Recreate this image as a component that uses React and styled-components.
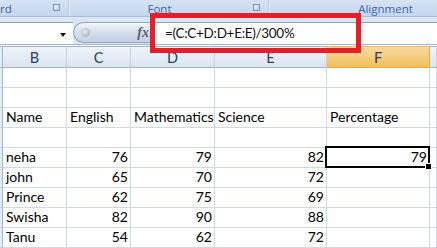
import React from 'react';
import styled, { createGlobalStyle } from 'styled-components';

const GlobalStyle = createGlobalStyle`
  html, body { margin: 0; padding: 0; background: #fff; }
  body { font-family: Lato, "Open Sans", sans-serif; }
`;

const columns = [
  { key: 'B', width: 64 },
  { key: 'C', width: 64 },
  { key: 'D', width: 84 },
  { key: 'E', width: 112 },
  { key: 'F', width: 103, active: true },
];

const rows = [
  [],
  [],
  [
    { text: 'Name' },
    { text: 'English' },
    { text: 'Mathematics' },
    { text: 'Science' },
    { text: 'Percentage' },
  ],
  [],
  [
    { text: 'neha' },
    { text: '76', num: true },
    { text: '79', num: true },
    { text: '82', num: true },
    { text: '79', num: true, selected: true },
  ],
  [{ text: 'john' }, { text: '65', num: true }, { text: '70', num: true }, { text: '72', num: true }, {}],
  [{ text: 'Prince' }, { text: '62', num: true }, { text: '75', num: true }, { text: '69', num: true }, {}],
  [{ text: 'Swisha' }, { text: '82', num: true }, { text: '90', num: true }, { text: '88', num: true }, {}],
  [{ text: 'Tanu' }, { text: '54', num: true }, { text: '62', num: true }, { text: '72', num: true }, {}],
];

const gridTemplate = `3px ${columns.map((c) => c.width + 'px').join(' ')} 1fr`;

const App = () => {
  return (
    <Page>
      <GlobalStyle />
      <RibbonLabels>
        <GroupLabel $width={70} $align="left" $launcher>
          <span>rd</span>
          <Launcher />
        </GroupLabel>
        <GroupLabel $width={198} $launcher>
          <span>Font</span>
          <Launcher />
        </GroupLabel>
        <GroupLabel $width={228}>
          <span>Alignment</span>
        </GroupLabel>
      </RibbonLabels>

      <FormulaBar>
        <NameBox>
          <DropArrow />
        </NameBox>
        <FxButton>
          <Knob />
          <Fx>fx</Fx>
        </FxButton>
        <FormulaInput>=(C:C+D:D+E:E)/300%</FormulaInput>
      </FormulaBar>

      <Sheet>
        <HeaderRow style={{ gridTemplateColumns: gridTemplate }}>
          <CornerCell />
          {columns.map((c) => (
            <ColHeader key={c.key} $active={c.active}>
              {c.key}
            </ColHeader>
          ))}
          <ColHeader />
        </HeaderRow>
        {rows.map((row, i) => (
          <Row key={i} style={{ gridTemplateColumns: gridTemplate }}>
            <RowHeader />
            {columns.map((c, j) => {
              const cell = row[j] || {};
              return (
                <Cell key={c.key} $num={cell.num} $selected={cell.selected}>
                  {cell.text}
                </Cell>
              );
            })}
            <Cell />
          </Row>
        ))}
      </Sheet>

      <Highlight />
    </Page>
  );
};

export default App;

const Page = styled.div`
  position: relative;
  width: 437px;
  height: 248px;
  overflow: hidden;
  background: #fff;
`;

const RibbonLabels = styled.div`
  display: flex;
  height: 17px;
  background: linear-gradient(#d6e3f4, #c3d7ef);
  border-bottom: 1px solid #a8bfdc;
  box-sizing: border-box;
`;

const GroupLabel = styled.div`
  position: relative;
  flex: 0 0 ${(p) => p.$width}px;
  display: flex;
  align-items: flex-start;
  justify-content: ${(p) => (p.$align === 'left' ? 'flex-start' : 'center')};
  box-sizing: border-box;
  border-right: 1px solid #eef3fa;
  box-shadow: inset -1px 0 0 #b7cbe5;
  margin-right: 2px;
  padding-top: 2px;
  padding-right: ${(p) => (p.$launcher && p.$align !== 'left' ? '22px' : '0')};
  font-family: "Open Sans", "DejaVu Sans", sans-serif;
  font-size: 11.5px;
  line-height: 14px;
  color: #3f66a6;
  white-space: nowrap;
`;

const Launcher = styled.div`
  position: absolute;
  right: 9px;
  top: 4px;
  width: 5px;
  height: 5px;
  border: 1px solid #7d93b4;
  background: linear-gradient(135deg, #f5f8fc, #b9c9de);
`;

const FormulaBar = styled.div`
  display: flex;
  height: 28px;
  padding-top: 5px;
  box-sizing: border-box;
  background: #dbe6f4;
  border-bottom: 1px solid #a5b6cd;
`;

const NameBox = styled.div`
  position: relative;
  flex: 0 0 73px;
  background: #fff;
  border-top: 1px solid #8ea2bf;
  box-sizing: border-box;
`;

const DropArrow = styled.div`
  position: absolute;
  left: 60px;
  top: 10px;
  width: 0;
  height: 0;
  border-left: 3.5px solid transparent;
  border-right: 3.5px solid transparent;
  border-top: 4px solid #111;
`;

const FxButton = styled.div`
  flex: 0 0 77px;
  display: flex;
  align-items: center;
  justify-content: space-between;
  padding: 0 0 0 7px;
  box-sizing: border-box;
  height: 21px;
  border: 1px solid #8fa5c4;
  border-right: none;
  border-radius: 11px 0 0 11px;
  background: linear-gradient(#f3f6fa, #d5dfeb 50%, #c4d1e2);
`;

const Knob = styled.div`
  width: 9px;
  height: 9px;
  border-radius: 50%;
  background: radial-gradient(circle at 40% 40%, #e6e9ee, #9aa3ad);
`;

const Fx = styled.span`
  font-family: "Liberation Serif", "DejaVu Serif", serif;
  font-style: italic;
  font-weight: bold;
  font-size: 14px;
  color: #5c6470;
  margin-right: 1px;
`;

const FormulaInput = styled.div`
  flex: 1;
  background: #fff;
  border-top: 1px solid #8ea2bf;
  box-sizing: border-box;
  padding-left: 15px;
  font-size: 13.5px;
  letter-spacing: -0.3px;
  line-height: 21px;
  color: #111;
  white-space: nowrap;
`;

const Sheet = styled.div`
  display: flex;
  flex-direction: column;
  margin-top: 1px;
`;

const HeaderRow = styled.div`
  display: grid;
  height: 22px;
`;

const CornerCell = styled.div`
  border-top: 1px solid #9eb6ce;
  border-right: 1px solid #9eb6ce;
  border-bottom: 1px solid #9eb6ce;
  background: #e4ecf7;
`;

const ColHeader = styled.div`
  display: flex;
  align-items: center;
  justify-content: center;
  box-sizing: border-box;
  border-top: 1px solid ${(p) => (p.$active ? '#f0b75b' : '#9eb6ce')};
  border-right: 1px solid ${(p) => (p.$active ? '#f2a83e' : '#c5d3e3')};
  border-bottom: 1px solid ${(p) => (p.$active ? '#f2a83e' : '#9eb6ce')};
  background: ${(p) =>
    p.$active
      ? 'linear-gradient(#f9d99f, #f1c15f)'
      : 'linear-gradient(#f0f4fa, #e4ebf5 60%, #dae3ef)'};
  font-size: 14.5px;
  color: #27415f;
`;

const Row = styled.div`
  display: grid;
  height: 20px;
`;

const RowHeader = styled.div`
  border-right: 1px solid #9eb6ce;
  border-bottom: 1px solid #c5d3e3;
  background: #e4ecf7;
`;

const Cell = styled.div`
  position: relative;
  display: flex;
  align-items: flex-end;
  justify-content: ${(p) => (p.$num ? 'flex-end' : 'flex-start')};
  box-sizing: border-box;
  border-right: 1px solid #d0d7e5;
  border-bottom: 1px solid #d0d7e5;
  padding: 0 2px 1px 3px;
  font-size: 14px;
  line-height: 18px;
  color: #000;
  white-space: nowrap;

  ${(p) =>
    p.$selected &&
    `
    &::after {
      content: '';
      position: absolute;
      left: -2px;
      top: -2px;
      right: -1px;
      bottom: -1px;
      border: 2px solid #000;
    }
    &::before {
      content: '';
      position: absolute;
      right: -3px;
      bottom: -3px;
      width: 5px;
      height: 5px;
      background: #000;
      border: 1px solid #fff;
      z-index: 1;
    }
  `}
`;

const Highlight = styled.div`
  position: absolute;
  left: 150px;
  top: 13px;
  width: 211px;
  height: 40px;
  box-sizing: border-box;
  border: 5px solid #e71d27;
`;
